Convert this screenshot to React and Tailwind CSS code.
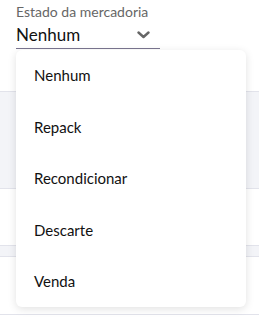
import React from "react";

const options = ["Nenhum", "Repack", "Recondicionar", "Descarte", "Venda"];

function Chevron() {
  return (
    <svg width="13" height="8" viewBox="0 0 13 8" fill="none">
      <path d="M1.5 1.5 L6.5 6 L11.5 1.5" stroke="#666" strokeWidth="2.4" strokeLinecap="round" strokeLinejoin="round" />
    </svg>
  );
}

export default function App() {
  return (
    <div className="relative w-full h-[317px] overflow-hidden bg-white" style={{ fontFamily: "Lato, 'Noto Sans', sans-serif" }}>
      <div className="h-[91px] px-4 pt-[3px]">
        <div className="text-[14px] leading-[18px] text-[#666]">Estado da mercadoria</div>
        <div className="w-[144px] h-[28px] flex items-end justify-between border-b border-[#7a7590] pr-[10px] pb-[2px]">
          <span className="text-[17px] leading-[22px] text-[#111]">Nenhum</span>
          <span className="mb-[7px]">
            <Chevron />
          </span>
        </div>
      </div>
      <div className="h-[98px] bg-[#f3f4f8] border-y border-[#e2e3eb]" />
      <div className="h-[56px]" />
      <div className="h-[12px] bg-[#f3f4f8] border-y border-[#e2e3eb]" />
      <div className="h-[57px]" />
      <div className="border-t border-[#e2e3eb]" />

      <div className="absolute left-4 top-[50px] w-[230px] bg-white rounded-md shadow-[0_2px_8px_rgba(0,0,0,0.12)]">
        {options.map((o) => (
          <div key={o} className="h-[51.4px] flex items-center pl-[18px] text-[15px] text-[#111]">
            {o}
          </div>
        ))}
      </div>
    </div>
  );
}
